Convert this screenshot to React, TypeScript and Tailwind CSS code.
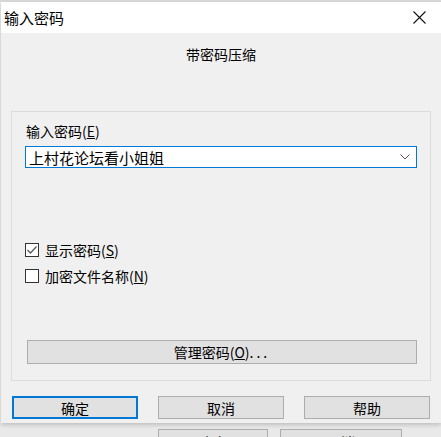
import { useState } from "react";

const font = "font-['Microsoft_YaHei','Noto_Sans_CJK_SC',sans-serif]";

export default function App() {
  const [pwd, setPwd] = useState("上村花论坛看小姐姐");
  const [showPwd, setShowPwd] = useState(true);
  const [encryptNames, setEncryptNames] = useState(false);

  return (
    <div className={`w-[441px] h-[437px] bg-[#e9e9e9] overflow-hidden text-black ${font}`}>
      {/* 窗口 */}
      <div className="h-[2px] bg-[#d9d9d9]" />
      <div className="ml-[1px] w-[440px] bg-[#f0f0f0] shadow-[0_2px_4px_rgba(0,0,0,0.18)]">
        {/* 标题栏 */}
        <div className="h-[31px] bg-white flex items-center justify-between pl-[3px] pr-[14px]">
          <span className="text-[15px] leading-none">输入密码</span>
          <svg width="13" height="13" viewBox="0 0 13 13" className="mr-[1px]">
            <path d="M0.5 0.5 L12.5 12.5 M12.5 0.5 L0.5 12.5" stroke="#111" strokeWidth="1.1" />
          </svg>
        </div>

        {/* 内容 */}
        <div className="pt-[12px] text-[14px] leading-[18px] text-center">带密码压缩</div>

        <div className="mt-[48px] ml-[10px] w-[420px] h-[270px] border border-[#dcdcdc] pl-[13px] pt-[11px]">
          <div className="text-[14px] leading-[16px] pl-[1px]">输入密码(<span className="underline">E</span>)</div>
          <div className="mt-[7px] w-[392px] h-[22px] bg-white border border-[#0078d7] flex items-center pl-[3px] pr-[6px]">
            <input
              value={pwd}
              onChange={(e) => setPwd(e.target.value)}
              className="flex-1 min-w-0 outline-none text-[15px] leading-none bg-transparent"
            />
            <svg width="10" height="6" viewBox="0 0 10 6">
              <path d="M0.5 0.5 L5 5 L9.5 0.5" stroke="#555" strokeWidth="1" fill="none" />
            </svg>
          </div>

          <label className="mt-[74px] flex items-center gap-[6px] h-[15px] cursor-pointer">
            <span
              onClick={() => setShowPwd((p) => !p)}
              className="w-[14px] h-[14px] bg-white border border-[#333] flex items-center justify-center"
            >
              {showPwd && (
                <svg width="12" height="12" viewBox="0 0 12 12">
                  <path d="M1.5 6 L4.5 9 L10.5 2.5" stroke="#5a5a5a" strokeWidth="1.3" fill="none" />
                </svg>
              )}
            </span>
            <span className="text-[14px] leading-none">显示密码(<span className="underline">S</span>)</span>
          </label>

          <label className="mt-[11px] flex items-center gap-[6px] h-[15px] cursor-pointer">
            <span
              onClick={() => setEncryptNames((p) => !p)}
              className="w-[14px] h-[14px] bg-white border border-[#333] flex items-center justify-center"
            >
              {encryptNames && (
                <svg width="12" height="12" viewBox="0 0 12 12">
                  <path d="M1.5 6 L4.5 9 L10.5 2.5" stroke="#5a5a5a" strokeWidth="1.3" fill="none" />
                </svg>
              )}
            </span>
            <span className="text-[14px] leading-none">加密文件名称(<span className="underline">N</span>)</span>
          </label>

          <button className="mt-[57px] ml-[2px] w-[390px] h-[24px] bg-[#e1e1e1] border border-[#adadad] text-[14px] leading-none">
            管理密码(<span className="underline">O</span>)<span className="tracking-[3px]">...</span>
          </button>
        </div>

        {/* 按钮 */}
        <div className="flex gap-[20px] pl-[11px] pt-[15px] pb-[4px]">
          <button className="w-[126px] h-[23px] bg-[#e1e1e1] border-2 border-[#0078d7] text-[14px] leading-none">确定</button>
          <button className="w-[126px] h-[23px] bg-[#e1e1e1] border border-[#adadad] text-[14px] leading-none">取消</button>
          <button className="w-[126px] h-[23px] bg-[#e1e1e1] border border-[#adadad] text-[14px] leading-none">帮助</button>
        </div>
      </div>

      {/* 后面的窗口 */}
      <div className="flex pl-[158px] gap-[12px] mt-[6px]">
        <div className="w-[110px] h-[20px] border border-[#adadad] bg-[#e1e1e1] text-[14px] pt-[2px] text-center">确定</div>
        <div className="w-[122px] h-[20px] border border-[#adadad] bg-[#e1e1e1] text-[14px] pt-[2px] text-center">取消</div>
      </div>
    </div>
  );
}
